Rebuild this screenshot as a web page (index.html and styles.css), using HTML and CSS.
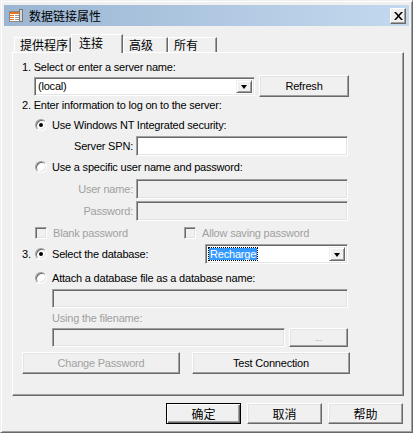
FILE: index.html
```html
<!DOCTYPE html>
<html lang="zh-CN">
<head>
    <meta charset="UTF-8">
    <title>数据链接属性</title>
    <link rel="stylesheet" href="styles.css">
</head>
<body>
    <div class="window">
        <div class="titlebar">
            <svg class="app-icon" width="16" height="16" viewBox="0 0 16 16">
                <rect x="1.5" y="3.5" width="10" height="10" fill="#fff" stroke="#8a8a8a"/>
                <rect x="2" y="4" width="9" height="2" fill="#e8731f"/>
                <rect x="2" y="7" width="4" height="1" fill="#e8731f"/>
                <rect x="2" y="9" width="4" height="1" fill="#e8731f"/>
                <rect x="2" y="11" width="4" height="1" fill="#e8731f"/>
                <rect x="7" y="7" width="4" height="1" fill="#9a9a9a"/>
                <rect x="7" y="9" width="4" height="1" fill="#9a9a9a"/>
                <rect x="7" y="11" width="4" height="1" fill="#9a9a9a"/>
                <rect x="11.5" y="1.5" width="3" height="12" fill="#d8d8d8" stroke="#7a7a7a"/>
            </svg>
            <span class="title">数据链接属性</span>
            <div class="close-btn">
                <svg width="9" height="8" viewBox="0 0 9 8">
                    <path d="M0 0h2l2.5 2.8L7 0h2L5.5 4L9 8H7L4.5 5.2L2 8H0l3.5-4z" fill="#000"/>
                </svg>
            </div>
        </div>

        <div class="tabs">
            <div class="tab t1">提供程序</div>
            <div class="tab t2 active">连接</div>
            <div class="tab t3">高级</div>
            <div class="tab t4">所有</div>
        </div>

        <div class="panel">
            <div class="row r-text mt7">1. Select or enter a server name:</div>

            <div class="row r-btn mt1 pad12">
                <div class="field combo server">
                    <span class="combo-text">(local)</span>
                    <span class="drop"><i class="arrow"></i></span>
                </div>
                <div class="btn refresh">Refresh</div>
            </div>

            <div class="row r-text mt1">2. Enter information to log on to the server:</div>

            <div class="row r-text mt6 indent">
                <span class="radio checked"></span>
                <span>Use Windows NT Integrated security:</span>
            </div>

            <div class="row r-field mt4">
                <span class="field-label">Server SPN:</span>
                <div class="field wide"></div>
            </div>

            <div class="row r-text mt4 indent">
                <span class="radio"></span>
                <span>Use a specific user name and password:</span>
            </div>

            <div class="row r-field mt5">
                <span class="field-label disabled">User name:</span>
                <div class="field wide off"></div>
            </div>

            <div class="row r-field mt2">
                <span class="field-label disabled">Password:</span>
                <div class="field wide off"></div>
            </div>

            <div class="row r-text mt5 indent disabled">
                <span class="check"></span>
                <span class="check-label">Blank password</span>
                <span class="check second"></span>
                <span>Allow saving password</span>
            </div>

            <div class="row r-field mt4">
                <span class="step">3.</span>
                <span class="radio checked"></span>
                <span class="db-label">Select the database:</span>
                <div class="field combo db">
                    <span class="combo-text"><span class="selected">Recharge</span></span>
                    <span class="drop"><i class="arrow"></i></span>
                </div>
            </div>

            <div class="row r-text mt7 indent">
                <span class="radio"></span>
                <span>Attach a database file as a database name:</span>
            </div>

            <div class="row r-input mt4 sub">
                <div class="field off attach"></div>
            </div>

            <div class="row r-text mt3 sub disabled">Using the filename:</div>

            <div class="row r-input mt3 sub">
                <div class="field off filename"></div>
                <div class="btn small disabled">...</div>
            </div>

            <div class="row r-btn mt5">
                <div class="btn action disabled">Change Password</div>
                <div class="btn action test">Test Connection</div>
            </div>
        </div>

        <div class="footer">
            <div class="btn dialog default">确定</div>
            <div class="btn dialog">取消</div>
            <div class="btn dialog">帮助</div>
        </div>
    </div>
</body>
</html>
```

FILE: styles.css
```css
body {
    margin: 0;
    background: #fff;
    font-family: "Liberation Sans", Arial, "Noto Sans CJK SC", sans-serif;
    font-size: 11px;
    letter-spacing: -0.2px;
    color: #000;
}

.window {
    width: 413px;
    height: 433px;
    box-sizing: border-box;
    background: #f0f0f0;
    border: 1px solid;
    border-color: #f0f0f0 #696969 #696969 #f0f0f0;
    box-shadow: inset 1px 1px #fff, inset -1px -1px #a0a0a0;
    padding: 4px 3px 0;
}

/* title bar */
.titlebar {
    height: 21px;
    display: flex;
    align-items: center;
    background: linear-gradient(to right, #9bb5d2, #c3d9ef);
    padding: 0 3px 0 4px;
}

.app-icon {
    flex: none;
}

.title {
    margin-left: 5px;
    font-family: "Noto Sans CJK SC", sans-serif;
    font-size: 12px;
    letter-spacing: 0;
    flex: 1;
}

.close-btn {
    width: 16px;
    height: 16px;
    box-sizing: border-box;
    background: #f0f0f0;
    border: 1px solid;
    border-color: #fff #696969 #696969 #fff;
    box-shadow: inset -1px -1px #a0a0a0;
    display: flex;
    align-items: center;
    justify-content: center;
}

/* tabs */
.tabs {
    display: flex;
    align-items: flex-end;
    height: 18px;
    margin: 8px 0 0 10px;
    position: relative;
    z-index: 1;
}

.tab {
    height: 15px;
    box-sizing: border-box;
    border-top: 1px solid #fff;
    border-left: 1px solid #fff;
    border-right: 1px solid #696969;
    box-shadow: inset -1px 0 #a0a0a0;
    font-family: "Noto Sans CJK SC", sans-serif;
    font-size: 12px;
    letter-spacing: 0;
    line-height: 14px;
    padding-left: 5px;
    background: #f0f0f0;
}

.t1 { width: 57px; }
.t2 { width: 52px; }
.t3 { width: 45px; }
.t4 { width: 49px; }

.tab.active {
    height: 19px;
    margin-bottom: -1px;
    padding-left: 7px;
    line-height: 16px;
}

/* main panel */
.panel {
    width: 392px;
    height: 344px;
    box-sizing: border-box;
    margin-left: 8px;
    border: 1px solid;
    border-color: #fff #696969 #696969 #fff;
    box-shadow: inset -1px -1px #a0a0a0;
    padding-left: 9px;
    display: flex;
    flex-direction: column;
}

.row {
    display: flex;
    align-items: center;
    flex: none;
}

.r-text { height: 14px; }
.r-btn { height: 22px; }
.r-field { height: 20px; }
.r-input { height: 19px; }

.mt1 { margin-top: 1px; }
.mt2 { margin-top: 2px; }
.mt3 { margin-top: 3px; }
.mt4 { margin-top: 4px; }
.mt5 { margin-top: 5px; }
.mt6 { margin-top: 6px; }
.mt7 { margin-top: 7px; }

.indent { padding-left: 13px; }
.pad12 { padding-left: 12px; }
.sub { padding-left: 30px; }

.disabled { color: #a0a0a0; }

/* sunken edit fields */
.field {
    box-sizing: border-box;
    height: 100%;
    background: #fff;
    border: 1px solid;
    border-color: #a0a0a0 #fff #fff #a0a0a0;
    box-shadow: inset 1px 1px #696969, inset -1px -1px #e3e3e3;
    flex: none;
}

.field.off {
    background: #f0f0f0;
}

.field-label {
    width: 111px;
    text-align: right;
    margin-right: 3px;
}

.wide { width: 212px; }
.attach { width: 296px; }
.filename { width: 233px; }

/* combo boxes */
.combo {
    display: flex;
    align-items: center;
    padding: 2px;
}

.server {
    width: 221px;
    height: 19px;
}

.db {
    width: 143px;
}

.combo-text {
    flex: 1;
    padding-left: 1px;
    line-height: 14px;
}

.selected {
    background: #3399ff;
    color: #fff;
    outline: 1px dotted #000;
    padding: 0 1px;
}

.drop {
    width: 16px;
    height: 100%;
    box-sizing: border-box;
    background: #f0f0f0;
    border: 1px solid;
    border-color: #f0f0f0 #696969 #696969 #f0f0f0;
    box-shadow: inset 1px 1px #fff, inset -1px -1px #a0a0a0;
    display: flex;
    align-items: center;
    justify-content: center;
}

.arrow {
    width: 0;
    height: 0;
    border-left: 3.5px solid transparent;
    border-right: 3.5px solid transparent;
    border-top: 4px solid #000;
    margin-top: 1px;
}

/* radio buttons and checkboxes */
.radio {
    width: 12px;
    height: 12px;
    box-sizing: border-box;
    border-radius: 50%;
    background: #fff;
    border: 1px solid;
    border-color: #a0a0a0 #fff #fff #a0a0a0;
    box-shadow: inset 1px 1px #696969, inset -1px -1px #e3e3e3;
    margin-right: 5px;
    display: flex;
    align-items: center;
    justify-content: center;
    flex: none;
}

.radio.checked::after {
    content: "";
    width: 4px;
    height: 4px;
    border-radius: 50%;
    background: #000;
}

.check {
    width: 12px;
    height: 12px;
    box-sizing: border-box;
    background: #f0f0f0;
    border: 1px solid;
    border-color: #a0a0a0 #fff #fff #a0a0a0;
    box-shadow: inset 1px 1px #696969, inset -1px -1px #e3e3e3;
    margin-right: 6px;
    flex: none;
}

.check-label { width: 131px; }

.step { width: 13px; }

.db-label { width: 153px; }

/* raised buttons */
.btn {
    box-sizing: border-box;
    height: 100%;
    background: #f0f0f0;
    border: 1px solid;
    border-color: #fff #696969 #696969 #fff;
    box-shadow: inset -1px -1px #a0a0a0, inset 1px 1px #e3e3e3;
    display: flex;
    align-items: center;
    justify-content: center;
    flex: none;
}

.refresh {
    width: 90px;
    margin-left: 4px;
}

.small {
    width: 59px;
    margin-left: 4px;
    font-size: 9px;
}

.action { width: 158px; }
.test { margin-left: 12px; }

/* dialog buttons */
.footer {
    display: flex;
    justify-content: flex-end;
    gap: 6px;
    margin: 7px 6px 0 0;
}

.dialog {
    width: 75px;
    height: 21px;
    font-family: "Noto Sans CJK SC", sans-serif;
    font-size: 12px;
    letter-spacing: 0;
}

.default {
    border-color: #000;
    box-shadow: inset 1px 1px #fff, inset -1px -1px #696969, inset -2px -2px #a0a0a0;
}
```
